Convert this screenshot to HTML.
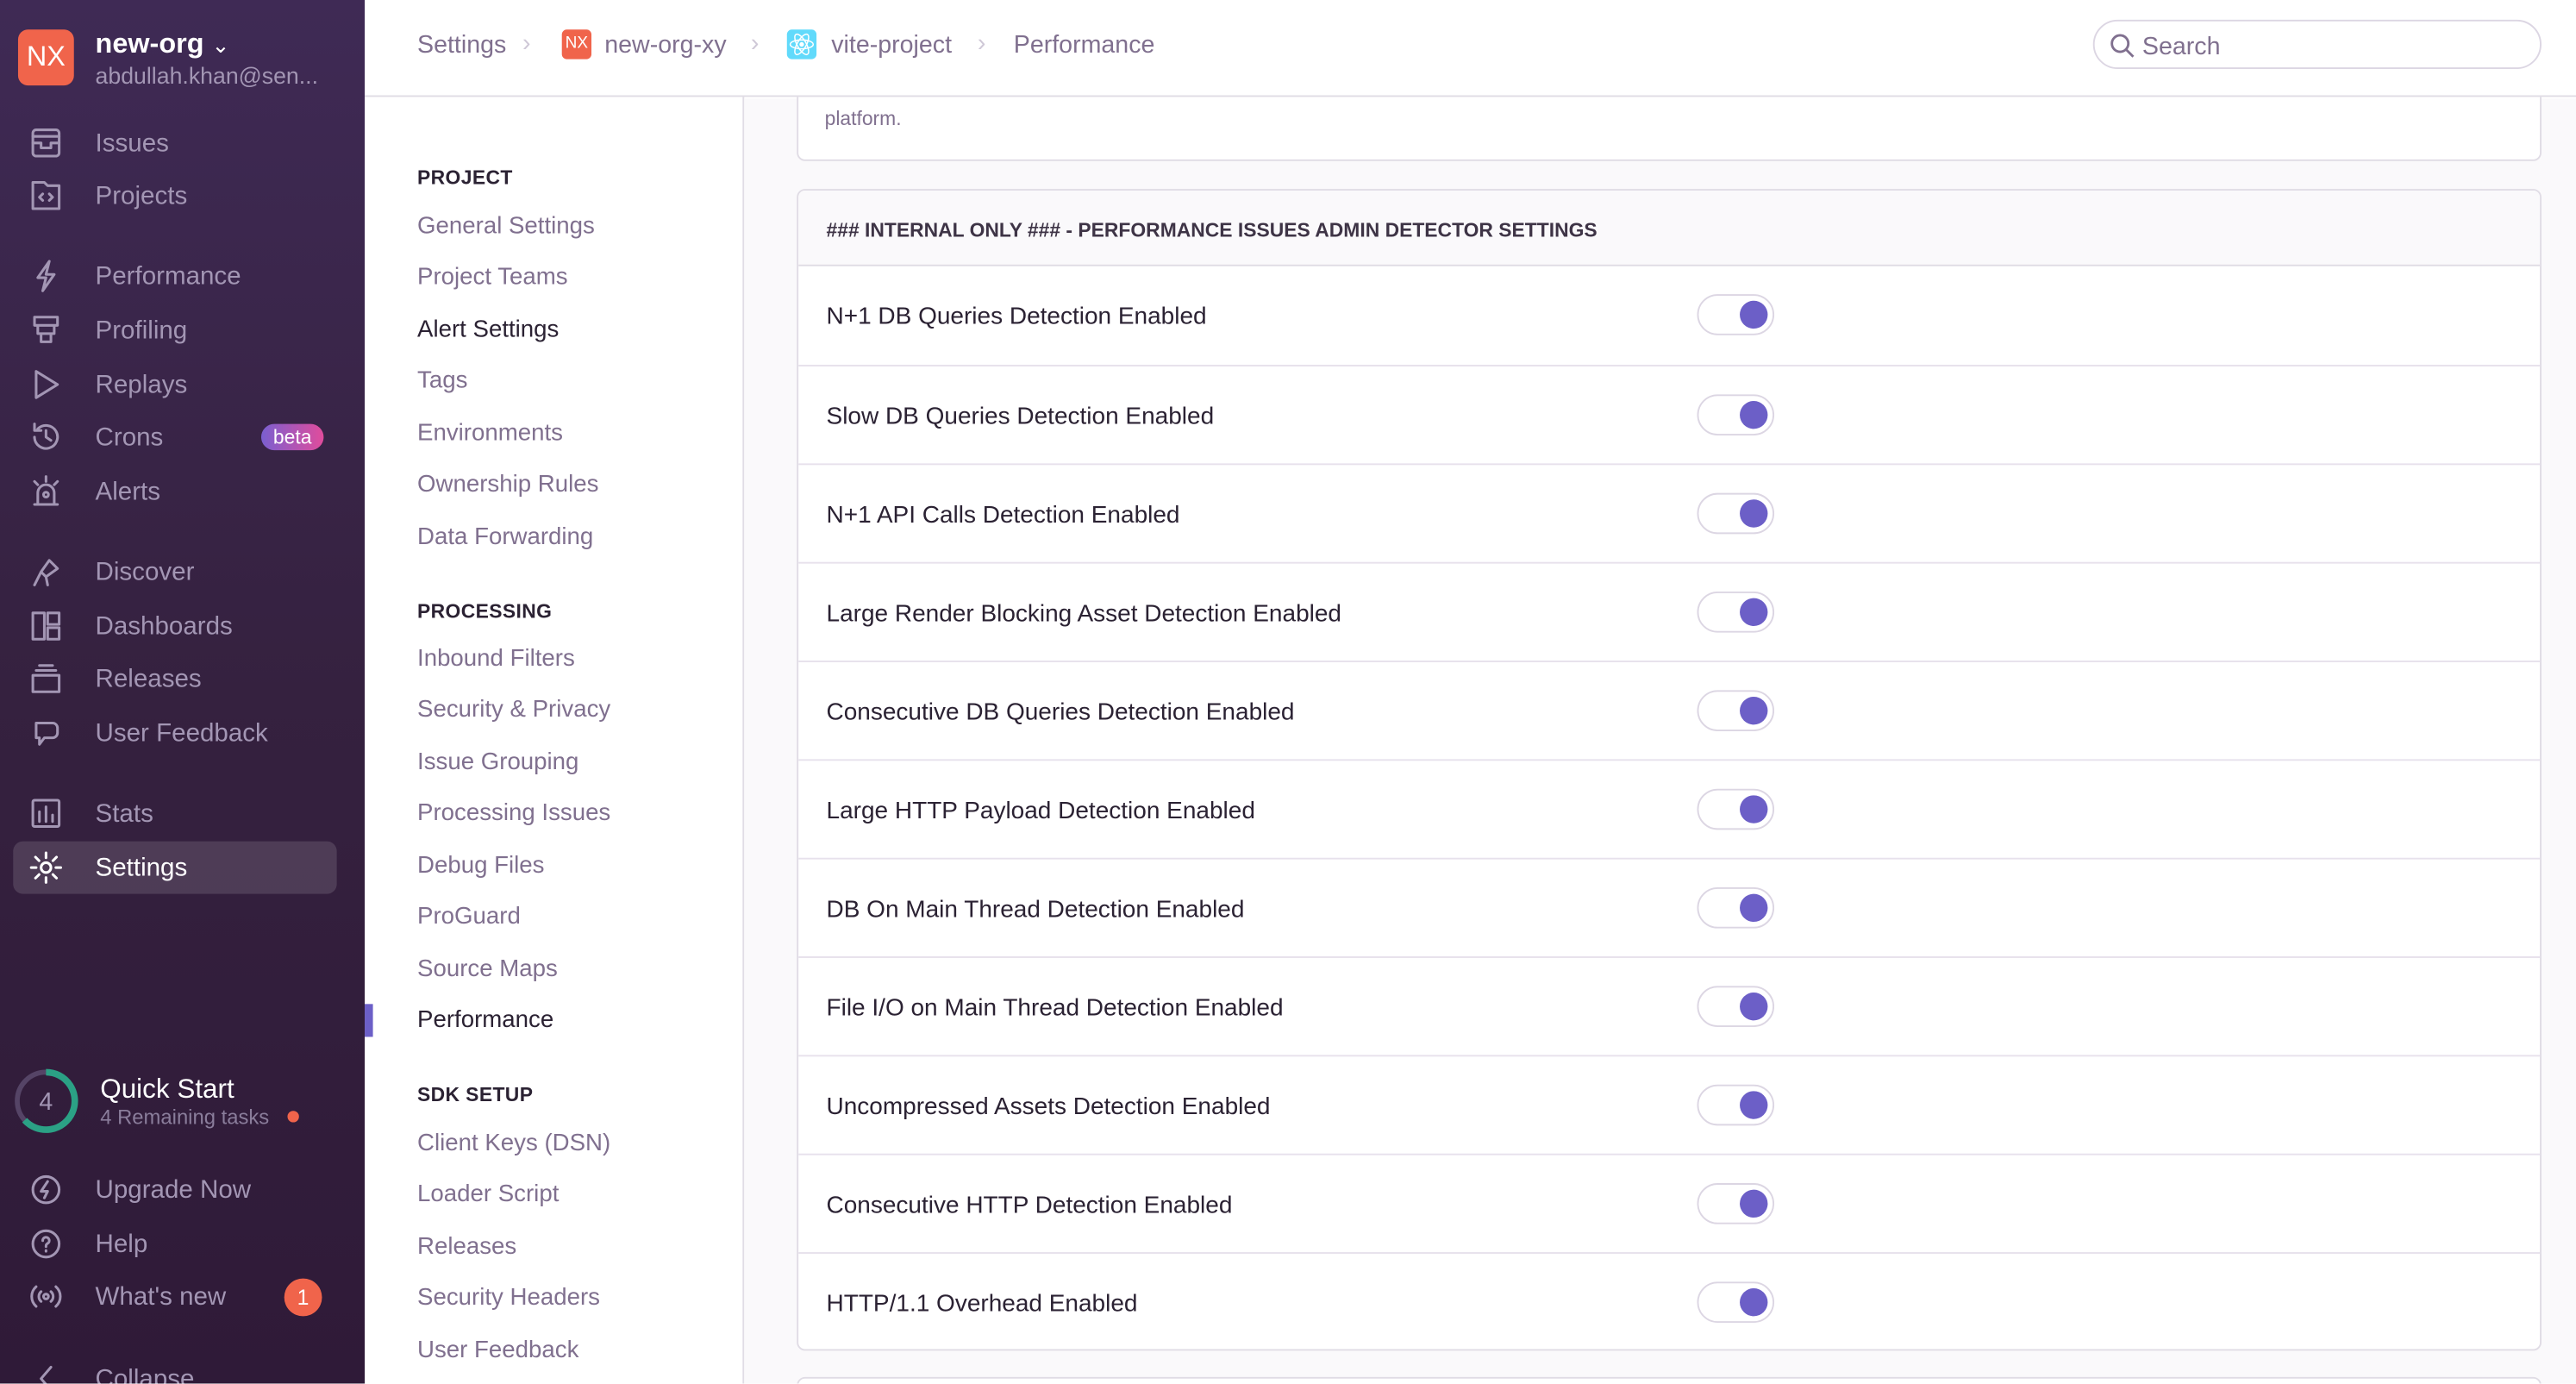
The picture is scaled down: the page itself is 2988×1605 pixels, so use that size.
<!DOCTYPE html>
<html><head><meta charset="utf-8"><style>
*{box-sizing:border-box;margin:0;padding:0}
html,body{width:2988px;height:1604px;overflow:hidden;background:#fff}
#s{position:absolute;left:0;top:0;width:1568px;height:842px;transform:scale(1.90561);transform-origin:0 0;font-family:"Liberation Sans",sans-serif;overflow:hidden}
.a{position:absolute;white-space:nowrap}
#side{position:absolute;left:0;top:0;width:222px;height:842px;background:linear-gradient(180deg,#3f2a55 0%,#35213f 50%,#2f1a38 100%);z-index:3}
.ni{position:absolute;left:0;width:222px;height:32px;color:#a396b4;font-size:15.5px}
.ni span{position:absolute;left:58px;top:8px}
.ni svg{position:absolute;left:18px;top:6px;width:20px;height:20px;fill:none;stroke:#a396b4;stroke-width:1.6;stroke-linecap:round;stroke-linejoin:round}
.sn{position:absolute;left:254px;font-size:14.5px;color:#80708f}
.sh{position:absolute;left:254px;font-size:12px;font-weight:bold;color:#2b2233;letter-spacing:.2px}
.row{position:absolute;left:0;width:1061px;height:60px;border-top:1px solid #e7e1ec}
.row span{position:absolute;left:17px;top:23px;font-size:14.7px;color:#2b2233}
.tg{position:absolute;left:547px;top:17px;width:47px;height:25px;border:1.5px solid #dcd6e3;border-radius:13px;background:#fff}
.tg i{position:absolute;right:3px;top:2.5px;width:17px;height:17px;border-radius:50%;background:#6c5fc7}
#hdr{position:absolute;left:222px;top:0;width:1346px;height:59px;z-index:2}
</style></head><body><div id="s">
<div id="side">
 <div class="a" style="left:11px;top:18px;width:34px;height:34px;border-radius:6px;background:#f0644b;color:#fff;font-size:17px;text-align:center;line-height:34px">NX</div>
 <div class="a" style="left:58px;top:17px;color:#fff;font-size:17px;font-weight:bold">new-org <span style="font-weight:normal;font-size:13px">&#8964;</span></div>
 <div class="a" style="left:58px;top:38px;color:#a396b4;font-size:14px">abdullah.khan@sen...</div>
 <div class="ni" style="top:71px"><svg viewBox="0 0 20 20"><rect x="2" y="2" width="16" height="16" rx="2"/><path d="M2 6h16M2 10h5v3h6v-3h5"/></svg><span>Issues</span></div>
 <div class="ni" style="top:103px"><svg viewBox="0 0 20 20"><path d="M2 2h7l2 2h7v14H2z"/><path d="M8 9l-2 2 2 2M12 9l2 2-2 2"/></svg><span>Projects</span></div>
 <div class="ni" style="top:152px"><svg viewBox="0 0 20 20"><path d="M12 1L5 11h5l-2 8 7-10h-5z"/></svg><span>Performance</span></div>
 <div class="ni" style="top:185px"><svg viewBox="0 0 20 20"><path d="M3 2h14v5H3zM5 7v5h10V7M7 12v5h6v-5"/></svg><span>Profiling</span></div>
 <div class="ni" style="top:218px"><svg viewBox="0 0 20 20"><path d="M4 2l13 8-13 8z"/></svg><span>Replays</span></div>
 <div class="ni" style="top:250px"><svg viewBox="0 0 20 20"><path d="M3 10a7 7 0 1 0 2-5M3 2v4h4M10 6v4l3 2"/></svg><span>Crons</span>
  <div class="a" style="left:159px;top:8px;height:16px;width:38px;border-radius:8px;background:linear-gradient(90deg,#7a5fd0,#e04c9c);color:#fff;font-size:12px;text-align:center;line-height:16px">beta</div></div>
 <div class="ni" style="top:283px"><svg viewBox="0 0 20 20"><path d="M5 17v-6a5 5 0 0 1 10 0v6M3 18h14M10 1v3M3 4l2 2M17 4l-2 2"/><circle cx="10" cy="12" r="1.5"/></svg><span>Alerts</span></div>
 <div class="ni" style="top:332px"><svg viewBox="0 0 20 20"><path d="M12 3l5 5-7 5-3-3zM7 10l-4 8M10 13l1 5"/></svg><span>Discover</span></div>
 <div class="ni" style="top:365px"><svg viewBox="0 0 20 20"><rect x="2" y="2" width="7" height="16"/><rect x="11" y="2" width="7" height="7"/><rect x="11" y="11" width="7" height="7"/></svg><span>Dashboards</span></div>
 <div class="ni" style="top:397px"><svg viewBox="0 0 20 20"><path d="M2 8h16v10H2zM4 5h12M6 2h8"/></svg><span>Releases</span></div>
 <div class="ni" style="top:430px"><svg viewBox="0 0 20 20"><path d="M4 4h10a3 3 0 0 1 3 3v3a3 3 0 0 1-3 3H9l-3 4v-4H4z"/></svg><span>User Feedback</span></div>
 <div class="ni" style="top:479px"><svg viewBox="0 0 20 20"><rect x="2" y="2" width="16" height="16" rx="1"/><path d="M6 15V9M10 15V6M14 15v-4"/></svg><span>Stats</span></div>
 <div class="a" style="left:8px;top:512px;width:197px;height:32px;border-radius:6px;background:rgba(255,255,255,.13)"></div>
 <div class="ni" style="top:512px;color:#fff"><svg viewBox="0 0 20 20" style="stroke:#fff"><circle cx="10" cy="10" r="3"/><path d="M10 1v3M10 16v3M1 10h3M16 10h3M3.6 3.6l2.2 2.2M14.2 14.2l2.2 2.2M3.6 16.4l2.2-2.2M14.2 5.8l2.2-2.2"/></svg><span>Settings</span></div>
 <svg class="a" style="left:8px;top:650px" width="40" height="40" viewBox="0 0 40 40"><circle cx="20" cy="20" r="17.5" fill="none" stroke="#554466" stroke-width="3"/><path d="M20 2.5A17.5 17.5 0 1 1 7 31.7" fill="none" stroke="#2ba185" stroke-width="4"/><text x="20" y="25.5" font-size="15" fill="#a396b4" text-anchor="middle" font-family="Liberation Sans">4</text></svg>
 <div class="a" style="left:61px;top:654px;color:#fff;font-size:16.5px">Quick Start</div>
 <div class="a" style="left:61px;top:673px;color:#8a7d9b;font-size:12.5px">4 Remaining tasks</div>
 <div class="a" style="left:175px;top:676px;width:7px;height:7px;border-radius:50%;background:#f0644b"></div>
 <div class="ni" style="top:708px"><svg viewBox="0 0 20 20"><circle cx="10" cy="10" r="8"/><path d="M11 5l-4 6h4l-2 4"/></svg><span>Upgrade Now</span></div>
 <div class="ni" style="top:741px"><svg viewBox="0 0 20 20"><circle cx="10" cy="10" r="8"/><path d="M8 8a2 2 0 1 1 3 1.7c-1 .5-1 1-1 2M10 14v.5"/></svg><span>Help</span></div>
 <div class="ni" style="top:773px"><svg viewBox="0 0 20 20"><circle cx="10" cy="10" r="1.5"/><path d="M7 7a4 4 0 0 0 0 6M13 7a4 4 0 0 1 0 6M4 4a8 8 0 0 0 0 12M16 4a8 8 0 0 1 0 12"/></svg><span>What's new</span>
  <div class="a" style="left:173px;top:5px;width:23px;height:23px;border-radius:50%;background:#f0644b;color:#fff;font-size:13px;text-align:center;line-height:23px">1</div></div>
 <div class="ni" style="top:823px"><svg viewBox="0 0 20 20"><path d="M13 3l-6 7 6 7"/></svg><span>Collapse</span></div>
</div>
<!-- settings nav -->
<div class="a" style="left:452px;top:59px;width:1px;height:783px;background:#e0dce5"></div>
<div class="a" style="left:222px;top:611px;width:5px;height:20px;background:#6c5fc7"></div>
<div class="sh" style="top:101px">PROJECT</div>
<div class="sn" style="top:130px">General Settings</div>
<div class="sn" style="top:161px">Project Teams</div>
<div class="sn" style="top:193px;color:#2b2233">Alert Settings</div>
<div class="sn" style="top:224px">Tags</div>
<div class="sn" style="top:256px">Environments</div>
<div class="sn" style="top:287px">Ownership Rules</div>
<div class="sn" style="top:319px">Data Forwarding</div>
<div class="sh" style="top:365px">PROCESSING</div>
<div class="sn" style="top:393px">Inbound Filters</div>
<div class="sn" style="top:424px">Security &amp; Privacy</div>
<div class="sn" style="top:456px">Issue Grouping</div>
<div class="sn" style="top:487px">Processing Issues</div>
<div class="sn" style="top:519px">Debug Files</div>
<div class="sn" style="top:550px">ProGuard</div>
<div class="sn" style="top:582px">Source Maps</div>
<div class="sn" style="top:613px;color:#2b2233">Performance</div>
<div class="sh" style="top:659px">SDK SETUP</div>
<div class="sn" style="top:688px">Client Keys (DSN)</div>
<div class="sn" style="top:719px">Loader Script</div>
<div class="sn" style="top:751px">Releases</div>
<div class="sn" style="top:782px">Security Headers</div>
<div class="sn" style="top:814px">User Feedback</div>
<!-- content -->
<div class="a" style="left:453px;top:60px;width:1115px;height:782px;background:#faf9fb"></div>
<div class="a" style="left:485px;top:40px;width:1062px;height:58px;border:1px solid #e0dce5;border-radius:0 0 5px 5px;background:#fff"></div>
<div class="a" style="left:502px;top:65px;font-size:12px;color:#80708f">platform.</div>
<div class="a" style="left:485px;top:115px;width:1062px;height:707px;border:1px solid #e0dce5;border-radius:5px;background:#fff;overflow:hidden">
 <div class="a" style="left:0;top:0;width:1062px;height:46px;background:#faf9fb;border-bottom:1px solid #e0dce5"></div>
 <div class="a" style="left:17px;top:17px;font-size:12px;font-weight:bold;color:#3e3446">### INTERNAL ONLY ### - PERFORMANCE ISSUES ADMIN DETECTOR SETTINGS</div>
 <div class="row" style="top:46px;border-top:none"><span>N+1 DB Queries Detection Enabled</span><div class="tg"><i></i></div></div>
 <div class="row" style="top:106px"><span>Slow DB Queries Detection Enabled</span><div class="tg"><i></i></div></div>
 <div class="row" style="top:166px"><span>N+1 API Calls Detection Enabled</span><div class="tg"><i></i></div></div>
 <div class="row" style="top:226px"><span>Large Render Blocking Asset Detection Enabled</span><div class="tg"><i></i></div></div>
 <div class="row" style="top:286px"><span>Consecutive DB Queries Detection Enabled</span><div class="tg"><i></i></div></div>
 <div class="row" style="top:346px"><span>Large HTTP Payload Detection Enabled</span><div class="tg"><i></i></div></div>
 <div class="row" style="top:406px"><span>DB On Main Thread Detection Enabled</span><div class="tg"><i></i></div></div>
 <div class="row" style="top:466px"><span>File I/O on Main Thread Detection Enabled</span><div class="tg"><i></i></div></div>
 <div class="row" style="top:526px"><span>Uncompressed Assets Detection Enabled</span><div class="tg"><i></i></div></div>
 <div class="row" style="top:586px"><span>Consecutive HTTP Detection Enabled</span><div class="tg"><i></i></div></div>
 <div class="row" style="top:646px"><span>HTTP/1.1 Overhead Enabled</span><div class="tg"><i></i></div></div>
</div>
<div class="a" style="left:485px;top:838px;width:1062px;height:10px;border:1px solid #e0dce5;border-radius:5px;background:#fff"></div>
<!-- header -->
<div id="hdr">
 <div class="a" style="left:0;top:0;width:1346px;height:59px;border-bottom:1px solid #e0dce5;background:#fff"></div>
 <div class="a" style="left:32px;top:19px;font-size:15px;color:#80708f">Settings</div>
 <div class="a" style="left:96px;top:18px;font-size:15px;color:#cfc8d7">&#8250;</div>
 <div class="a" style="left:120px;top:18px;width:18px;height:18px;border-radius:3px;background:#f0644b;color:#fff;font-size:10px;text-align:center;line-height:18px">NX</div>
 <div class="a" style="left:146px;top:19px;font-size:15px;color:#80708f">new-org-xy</div>
 <div class="a" style="left:235px;top:18px;font-size:15px;color:#cfc8d7">&#8250;</div>
 <div class="a" style="left:257px;top:18px;width:18px;height:18px;border-radius:3px;background:#61dafb"><svg width="18" height="18" viewBox="0 0 18 18" fill="none" stroke="#fff" stroke-width=".8"><ellipse cx="9" cy="9" rx="7" ry="2.7"/><ellipse cx="9" cy="9" rx="7" ry="2.7" transform="rotate(60 9 9)"/><ellipse cx="9" cy="9" rx="7" ry="2.7" transform="rotate(120 9 9)"/><circle cx="9" cy="9" r="1" fill="#fff"/></svg></div>
 <div class="a" style="left:284px;top:19px;font-size:15px;color:#80708f">vite-project</div>
 <div class="a" style="left:373px;top:18px;font-size:15px;color:#cfc8d7">&#8250;</div>
 <div class="a" style="left:395px;top:19px;font-size:15px;color:#80708f">Performance</div>
 <div class="a" style="left:1052px;top:12px;width:273px;height:30px;border:1px solid #dcd6e3;border-radius:15px;background:#fff"></div>
 <svg class="a" style="left:1062px;top:20px" width="16" height="16" viewBox="0 0 16 16" fill="none" stroke="#80708f" stroke-width="1.5"><circle cx="6.5" cy="6.5" r="5"/><path d="M10 10l4.5 4.5"/></svg>
 <div class="a" style="left:1082px;top:20px;font-size:15px;color:#80708f">Search</div>
</div>
</div></body></html>
